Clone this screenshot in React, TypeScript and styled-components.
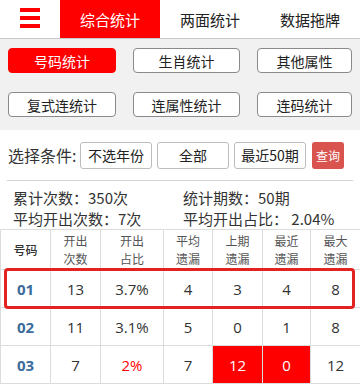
import React from "react";
import styled, { createGlobalStyle } from "styled-components";

const Global = createGlobalStyle`
  html, body { margin: 0; padding: 0; background: #fff; }
  body { font-family: "Noto Sans", "Noto Sans CJK SC", sans-serif; color: #333; }
  * { box-sizing: border-box; }
`;

const Page = styled.div`
  width: 360px;
  height: 385px;
  overflow: hidden;
  background: #fff;
`;

const NavBar = styled.div`
  display: flex;
  height: 39px;
  border-bottom: 1px solid #c8c8c8;
  background: #fff;
`;

const Burger = styled.div`
  width: 60px;
  display: flex;
  flex-direction: column;
  align-items: center;
  justify-content: center;
  gap: 4px;
  padding-bottom: 2px;
`;

const BurgerBar = styled.span`
  display: block;
  width: 20px;
  height: 4px;
  background: #f00;
`;

const Tab = styled.div<{ $active?: boolean }>`
  width: 100px;
  height: 38px;
  display: flex;
  align-items: center;
  justify-content: center;
  font-family: "Noto Sans CJK SC", sans-serif;
  font-size: 15px;
  background: ${(p) => (p.$active ? "#fe0000" : "#fff")};
  color: ${(p) => (p.$active ? "#fff" : "#222")};
`;

const GreyPanel = styled.div`
  background: #f1f1f1;
  padding: 9px 0 13px 8px;
  display: grid;
  grid-template-columns: 108px 107px 95px;
  column-gap: 17px;
  row-gap: 19px;
`;

const CatButton = styled.div<{ $active?: boolean }>`
  height: 25px;
  border-radius: 4px;
  display: flex;
  align-items: center;
  justify-content: center;
  font-family: "Noto Sans CJK SC", sans-serif;
  font-size: 14px;
  border: 1px solid ${(p) => (p.$active ? "#fe0000" : "#8a8a8a")};
  background: ${(p) => (p.$active ? "#fe0000" : "#fff")};
  color: ${(p) => (p.$active ? "#fff" : "#222")};
`;

const FilterRow = styled.div`
  display: flex;
  align-items: center;
  height: 50px;
  padding: 0 0 0 8px;
  gap: 5px;
`;

const FilterLabel = styled.span`
  font-family: "Noto Sans CJK SC", sans-serif;
  font-size: 16px;
  color: #333;
  width: 67px;
  white-space: nowrap;
`;

const FilterButton = styled.div`
  height: 27px;
  width: 72px;
  border: 1px solid #bdbdbd;
  border-radius: 3px;
  display: flex;
  align-items: center;
  justify-content: center;
  font-family: "Noto Sans CJK SC", sans-serif;
  font-size: 14px;
  color: #222;
  background: #fff;
`;

const QueryButton = styled.div`
  height: 27px;
  width: 32px;
  border-radius: 3px;
  background: #d9534f;
  color: #fff;
  display: flex;
  align-items: center;
  justify-content: center;
  font-family: "Noto Sans CJK SC", sans-serif;
  font-size: 12px;
  margin-left: 1px;
`;

const Divider = styled.div`
  height: 1px;
  margin: 0 7px 0 7px;
  background: #d4d4d4;
`;

const Stats = styled.div`
  display: grid;
  grid-template-columns: 170px 1fr;
  padding: 7px 0 0 13px;
  font-family: "Noto Sans CJK SC", sans-serif;
  font-size: 15px;
  line-height: 20px;
  color: #333;
  height: 48px;
`;

const TableWrap = styled.div`
  position: relative;
`;

const Table = styled.table`
  width: 360px;
  border-collapse: collapse;
  table-layout: fixed;
`;

const HeadCell = styled.th<{ $strong?: boolean }>`
  height: 40px;
  padding: 0;
  border: 1px solid #dcdcdc;
  font-family: "Noto Sans CJK SC", sans-serif;
  font-size: 12px;
  line-height: 18px;
  font-weight: ${(p) => (p.$strong ? 500 : 400)};
  color: ${(p) => (p.$strong ? "#333" : "#555")};
  text-align: center;
  vertical-align: middle;
`;

const Cell = styled.td<{ $tone?: "num" | "red" | "hot" }>`
  height: 38px;
  padding: 0;
  border: 1px solid #dcdcdc;
  text-align: center;
  vertical-align: middle;
  font-family: "Open Sans", "Noto Sans", sans-serif;
  font-size: 15px;
  color: ${(p) =>
    p.$tone === "num" ? "#3b6c9c" : p.$tone === "red" ? "#f00" : p.$tone === "hot" ? "#fff" : "#333"};
  font-weight: ${(p) => (p.$tone === "num" ? 700 : 400)};
  background: ${(p) => (p.$tone === "hot" ? "#fe0000" : "transparent")};
`;

const Highlight = styled.div`
  position: absolute;
  left: 4px;
  top: 39px;
  width: 351px;
  height: 41px;
  border: 3px solid #e32222;
  border-radius: 4px;
  pointer-events: none;
`;

type Tone = "num" | "red" | "hot" | undefined;
type Row = { v: string; t?: Tone }[];

const rows: Row[] = [
  [{ v: "01", t: "num" }, { v: "13" }, { v: "3.7%" }, { v: "4" }, { v: "3" }, { v: "4" }, { v: "8" }],
  [{ v: "02", t: "num" }, { v: "11" }, { v: "3.1%" }, { v: "5" }, { v: "0" }, { v: "1" }, { v: "8" }],
  [{ v: "03", t: "num" }, { v: "7" }, { v: "2%", t: "red" }, { v: "7" }, { v: "12", t: "hot" }, { v: "0", t: "hot" }, { v: "12" }],
];

const colWidths = [50, 50, 63, 49, 50, 48, 50];

export default function App() {
  return (
    <Page>
      <Global />
      <NavBar>
        <Burger>
          <BurgerBar />
          <BurgerBar />
          <BurgerBar />
        </Burger>
        <Tab $active>综合统计</Tab>
        <Tab>两面统计</Tab>
        <Tab>数据拖牌</Tab>
      </NavBar>
      <GreyPanel>
        <CatButton $active>号码统计</CatButton>
        <CatButton>生肖统计</CatButton>
        <CatButton>其他属性</CatButton>
        <CatButton>复式连统计</CatButton>
        <CatButton>连属性统计</CatButton>
        <CatButton>连码统计</CatButton>
      </GreyPanel>
      <FilterRow>
        <FilterLabel>选择条件:</FilterLabel>
        <FilterButton>不选年份</FilterButton>
        <FilterButton>全部</FilterButton>
        <FilterButton>最近50期</FilterButton>
        <QueryButton>查询</QueryButton>
      </FilterRow>
      <Divider />
      <Stats>
        <span>累计次数：350次</span>
        <span>统计期数：50期</span>
        <span>平均开出次数：7次</span>
        <span>平均开出占比： 2.04%</span>
      </Stats>
      <TableWrap>
        <Table>
          <colgroup>
            {colWidths.map((w, i) => (
              <col key={i} style={{ width: w }} />
            ))}
          </colgroup>
          <thead>
            <tr>
              <HeadCell $strong>号码</HeadCell>
              <HeadCell>开出<br />次数</HeadCell>
              <HeadCell>开出<br />占比</HeadCell>
              <HeadCell>平均<br />遗漏</HeadCell>
              <HeadCell>上期<br />遗漏</HeadCell>
              <HeadCell>最近<br />遗漏</HeadCell>
              <HeadCell>最大<br />遗漏</HeadCell>
            </tr>
          </thead>
          <tbody>
            {rows.map((r, i) => (
              <tr key={i}>
                {r.map((c, j) => (
                  <Cell key={j} $tone={c.t}>{c.v}</Cell>
                ))}
              </tr>
            ))}
          </tbody>
        </Table>
        <Highlight />
      </TableWrap>
    </Page>
  );
}
